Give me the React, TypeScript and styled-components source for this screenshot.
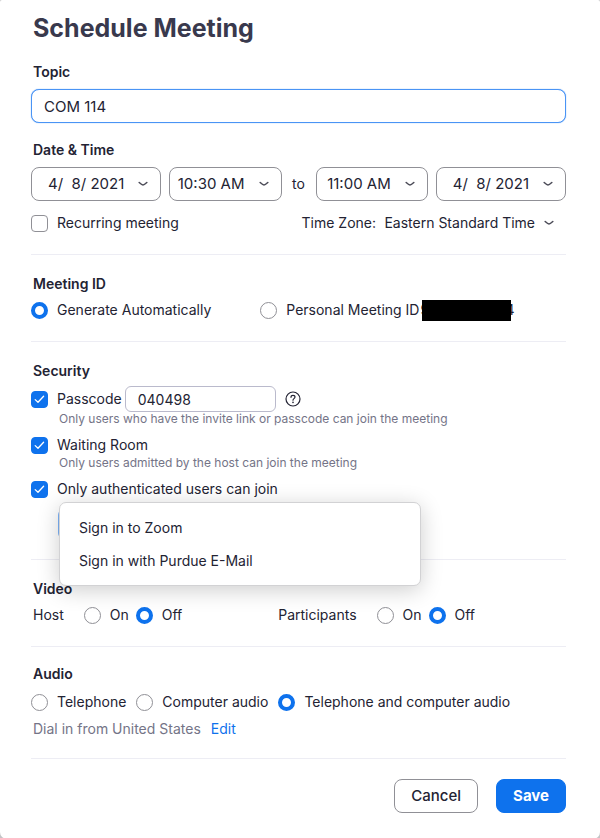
import React, { useState } from "react";
import styled, { createGlobalStyle } from "styled-components";

const ink = "#232333";
const blue = "#0e72ed";
const muted = "#747487";
const outline = "#909096";

const GlobalStyle = createGlobalStyle`
  * { box-sizing: border-box; }
  body {
    margin: 0;
    background: #c4c4c6;
    color: ${ink};
    font-family: Inter, "Liberation Sans", sans-serif;
    font-size: 14px;
    line-height: 18px;
  }
  input, select, button { font: inherit; color: inherit; margin: 0; }
`;

const Dialog = styled.form`
  min-height: 100vh;
  padding: 12px 34px 26px 31px;
  background: #fff;
  border-radius: 2px 2px 7px 7px;
`;

const Title = styled.h1`
  margin: 0 0 19px;
  padding-left: 2px;
  font-size: 25px;
  line-height: 32px;
  font-weight: 700;
  color: #39394d;
`;

const Section = styled.section<{ $top?: number }>`
  padding: ${(p) => p.$top ?? 20}px 0 20px;
  border-bottom: 1px solid #ededf4;
`;

const Heading = styled.h2<{ $gap?: number }>`
  margin: 0 0 ${(p) => p.$gap ?? 6}px;
  padding-left: 2px;
  font-size: 14px;
  line-height: 18px;
  font-weight: 600;
`;

const TopicInput = styled.input`
  display: block;
  width: 100%;
  height: 34px;
  margin-bottom: 18px;
  padding: 0 12px;
  border: 1px solid #4a94f5;
  border-radius: 8px;
  outline: none;
  background: #fff;
  box-shadow: 0 0 1px #4a94f5;
  font-size: 15px;
`;

const PasscodeInput = styled.input`
  width: 151px;
  height: 26px;
  padding: 0 12px;
  border: 1px solid #babacc;
  border-radius: 6px;
  outline: none;
  background: #fff;
`;

const TimeGrid = styled.div`
  display: grid;
  grid-template-columns: 130fr 112fr 18px 112fr 130fr;
  column-gap: 8px;
  align-items: center;
  text-align: center;
`;

const SelectBox = styled.span<{ $plain?: boolean }>`
  display: inline-grid;
  align-items: center;
  height: ${(p) => (p.$plain ? 22 : 34)}px;
  border: ${(p) => (p.$plain ? "0" : `1px solid ${outline}`)};
  border-radius: 8px;
  font-size: ${(p) => (p.$plain ? 14 : 15)}px;

  > * { grid-area: 1 / 1; }
  > select { padding-right: ${(p) => (p.$plain ? 31 : 36)}px; }
  > svg { justify-self: end; margin-right: 12px; pointer-events: none; }
`;

const Select = styled.select`
  width: 100%;
  height: 100%;
  padding: 0;
  border: 0;
  outline: none;
  appearance: none;
  background: transparent;
  text-align: right;
  text-align-last: right;
`;

const Row = styled.div<{ $gap?: number; $top?: number; $spread?: boolean }>`
  display: flex;
  align-items: center;
  min-height: 22px;
  gap: ${(p) => p.$gap ?? 0}px;
  margin-top: ${(p) => p.$top ?? 0}px;
  justify-content: ${(p) => (p.$spread ? "space-between" : "flex-start")};
`;

const RowLabel = styled.span`
  padding-left: 2px;
`;

const Columns = styled.div<{ $template: string }>`
  display: grid;
  grid-template-columns: ${(p) => p.$template};
`;

const Choice = styled.label`
  display: inline-flex;
  align-items: center;
  gap: 9px;
  white-space: nowrap;
`;

const Radio = styled.input`
  appearance: none;
  flex: none;
  width: 17px;
  height: 17px;
  border: 1px solid ${outline};
  border-radius: 50%;
  background: #fff;

  &:checked { border: 4px solid ${blue}; }
`;

const TickBox = styled.span`
  display: inline-grid;
  place-items: center;
  > * { grid-area: 1 / 1; }
  > svg { pointer-events: none; }
`;

const Checkbox = styled.input`
  appearance: none;
  width: 17px;
  height: 17px;
  border: 1px solid ${outline};
  border-radius: 4px;
  background: #fff;

  &:checked { border-color: ${blue}; background: ${blue}; }
`;

const MaskedId = styled.span`
  display: inline-grid;
  grid-template-columns: auto auto;
  justify-content: space-between;
  align-items: center;
  width: 94px;
  height: 21px;
  margin-left: -8px;
`;

const MaskBar = styled.span`
  grid-area: 1 / 1 / 2 / 3;
  z-index: 1;
  height: 21px;
  margin: 0 3px 0 2px;
  background: #000;
`;

const Digit = styled.span<{ $column: number }>`
  grid-area: 1 / ${(p) => p.$column};
`;

const HelpButton = styled.button`
  display: inline-flex;
  margin-left: 6px;
  padding: 0;
  border: 0;
  background: none;
`;

const Hint = styled.p`
  margin: 0 0 8px;
  padding-left: 28px;
  font-size: 12px;
  line-height: 14px;
  color: ${muted};
`;

const AuthMethod = styled.div`
  position: relative;
  margin: 9px 0 0 27px;
`;

const AuthButton = styled.button`
  display: block;
  width: 362px;
  height: 30px;
  border: 1px solid #7db3f8;
  border-radius: 6px;
  background: #fff;
`;

const Menu = styled.ul`
  position: absolute;
  top: -7px;
  left: 1px;
  z-index: 1;
  width: 362px;
  margin: 0;
  padding: 8px 0;
  list-style: none;
  background: #fff;
  border: 1px solid #d2d2d4;
  border-radius: 7px;
  box-shadow: 0 4px 22px rgba(0, 0, 0, 0.2);
`;

const MenuItem = styled.button`
  display: block;
  width: 100%;
  height: 33px;
  padding: 0 19px;
  border: 0;
  background: none;
  text-align: left;
`;

const DialIn = styled.p`
  margin: 7px 0 0;
  padding-left: 2px;
  color: ${muted};
`;

const EditLink = styled.a`
  margin-left: 10px;
  color: ${blue};
  text-decoration: none;
`;

const Actions = styled.footer`
  display: flex;
  justify-content: flex-end;
  gap: 18px;
  padding-top: 20px;
`;

const ActionButton = styled.button<{ $primary?: boolean }>`
  height: 34px;
  padding: 0 16px;
  border: 1px solid ${(p) => (p.$primary ? blue : outline)};
  border-radius: 8px;
  background: ${(p) => (p.$primary ? blue : "#fff")};
  color: ${(p) => (p.$primary ? "#fff" : ink)};
  font-size: 15px;
  font-weight: ${(p) => (p.$primary ? 700 : 500)};
`;

const Chevron = () => (
  <svg width="10" height="6" viewBox="0 0 10 6" fill="none" aria-hidden="true">
    <path d="M1.2 1.5 Q4 4 5 4 Q6 4 8.8 1.5" stroke="#4c4c58" strokeWidth="1.6" strokeLinecap="round" />
  </svg>
);

const Tick = () => (
  <svg width="11" height="9" viewBox="0 0 11 9" fill="none" aria-hidden="true">
    <path d="M1.2 4.6 4 7.3 9.6 1.2" stroke="#fff" strokeWidth="1.3" strokeLinecap="round" strokeLinejoin="round" />
  </svg>
);

const HelpIcon = () => (
  <svg width="16" height="16" viewBox="0 0 16 16" fill="none" stroke={ink} aria-hidden="true">
    <circle cx="8" cy="8" r="7" strokeWidth="1.2" />
    <path d="M6 6.3C6 5 6.9 4.3 8 4.3s2 .7 2 1.8c0 1.5-2 1.6-2 3.1" strokeWidth="1.2" strokeLinecap="round" />
    <circle cx="8" cy="11.4" r=".8" fill={ink} stroke="none" />
  </svg>
);

function PickList({ label, value }: { label: string; value: string }) {
  return (
    <SelectBox>
      <Select aria-label={label}>
        <option>{value}</option>
      </Select>
      <Chevron />
    </SelectBox>
  );
}

function CheckChoice({ label, initial = false }: { label: string; initial?: boolean }) {
  const [on, setOn] = useState(initial);
  return (
    <Choice>
      <TickBox>
        <Checkbox type="checkbox" checked={on} onChange={() => setOn(!on)} />
        {on && <Tick />}
      </TickBox>
      {label}
    </Choice>
  );
}

function RadioChoice({ name, checked, children }: { name: string; checked?: boolean; children: React.ReactNode }) {
  return (
    <Choice>
      <Radio type="radio" name={name} defaultChecked={checked} />
      {children}
    </Choice>
  );
}

function VideoGroup({ label, name }: { label: string; name: string }) {
  return (
    <Row $gap={20} role="radiogroup" aria-label={label}>
      <RowLabel>{label}</RowLabel>
      <Row $gap={7}>
        <RadioChoice name={name}>On</RadioChoice>
        <RadioChoice name={name} checked>Off</RadioChoice>
      </Row>
    </Row>
  );
}

export default function App() {
  const date = "4/\u00a0 8/ 2021";
  return (
    <>
      <GlobalStyle />
      <Dialog onSubmit={(e) => e.preventDefault()}>
        <Title>Schedule Meeting</Title>

        <Section $top={0}>
          <Heading $gap={8}><label htmlFor="topic">Topic</label></Heading>
          <TopicInput id="topic" type="text" defaultValue="COM 114" />
          <Heading $gap={8}>Date &amp; Time</Heading>
          <TimeGrid>
            <PickList label="Start date" value={date} />
            <PickList label="Start time" value="10:30 AM" />
            <span>to</span>
            <PickList label="End time" value="11:00 AM" />
            <PickList label="End date" value={date} />
          </TimeGrid>
          <Row $top={11} $spread>
            <CheckChoice label="Recurring meeting" />
            <Row $gap={8}>
              <label htmlFor="zone">Time Zone:</label>
              <SelectBox $plain>
                <Select id="zone" defaultValue="est">
                  <option value="est">Eastern Standard Time</option>
                </Select>
                <Chevron />
              </SelectBox>
            </Row>
          </Row>
        </Section>

        <Section>
          <Heading>Meeting ID</Heading>
          <Columns $template="3fr 4fr">
            <RadioChoice name="meeting-id" checked>Generate Automatically</RadioChoice>
            <Row>
              <RadioChoice name="meeting-id">
                Personal Meeting ID
                <MaskedId>
                  <Digit $column={1}>9</Digit>
                  <Digit $column={2}>4</Digit>
                  <MaskBar />
                </MaskedId>
              </RadioChoice>
            </Row>
          </Columns>
        </Section>

        <Section>
          <Heading>Security</Heading>
          <Row $gap={3}>
            <CheckChoice label="Passcode" initial />
            <PasscodeInput type="text" aria-label="Passcode value" defaultValue="040498" />
            <HelpButton type="button" aria-label="Passcode help"><HelpIcon /></HelpButton>
          </Row>
          <Hint>Only users who have the invite link or passcode can join the meeting</Hint>
          <Row><CheckChoice label="Waiting Room" initial /></Row>
          <Hint>Only users admitted by the host can join the meeting</Hint>
          <Row><CheckChoice label="Only authenticated users can join" initial /></Row>
          <AuthMethod>
            <AuthButton type="button" aria-label="Sign-in method" aria-expanded="true" />
            <Menu>
              <li><MenuItem type="button">Sign in to Zoom</MenuItem></li>
              <li><MenuItem type="button">Sign in with Purdue E-Mail</MenuItem></li>
            </Menu>
          </AuthMethod>
        </Section>

        <Section>
          <Heading>Video</Heading>
          <Columns $template="11fr 13fr">
            <VideoGroup label="Host" name="host-video" />
            <VideoGroup label="Participants" name="participant-video" />
          </Columns>
        </Section>

        <Section $top={18}>
          <Heading $gap={8}>Audio</Heading>
          <Row $gap={10}>
            <RadioChoice name="audio">Telephone</RadioChoice>
            <RadioChoice name="audio">Computer audio</RadioChoice>
            <RadioChoice name="audio" checked>Telephone and computer audio</RadioChoice>
          </Row>
          <DialIn>
            Dial in from United States
            <EditLink href="#edit">Edit</EditLink>
          </DialIn>
        </Section>

        <Actions>
          <ActionButton type="button">Cancel</ActionButton>
          <ActionButton type="submit" $primary>Save</ActionButton>
        </Actions>
      </Dialog>
    </>
  );
}
